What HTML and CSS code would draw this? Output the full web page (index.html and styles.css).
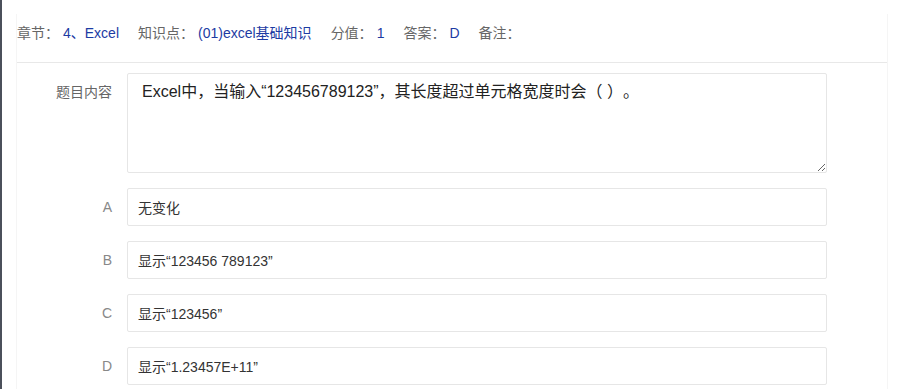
FILE: index.html
```html
<!DOCTYPE html>
<html lang="zh-CN">
<head>
    <meta charset="UTF-8">
    <meta name="viewport" content="width=device-width, initial-scale=1.0">
    <title>题目详情</title>
    <link rel="stylesheet" href="styles.css">
</head>
<body>
    <div class="side-strip"></div>
    <div class="main">
        <div class="card">
            <div class="info-bar">
                <span class="info-item"><span class="info-label">章节：</span><span class="info-value">4、Excel</span></span>
                <span class="info-item"><span class="info-label">知识点：</span><span class="info-value">(01)excel基础知识</span></span>
                <span class="info-item"><span class="info-label">分值：</span><span class="info-value">1</span></span>
                <span class="info-item"><span class="info-label">答案：</span><span class="info-value">D</span></span>
                <span class="info-item"><span class="info-label">备注：</span><span class="info-value"></span></span>
            </div>

            <div class="form">
                <div class="form-row">
                    <label class="form-label">题目内容</label>
                    <textarea class="form-textarea">Excel中，当输入“123456789123”，其长度超过单元格宽度时会（ ）。</textarea>
                </div>
                <div class="form-row">
                    <label class="form-label option-label">A</label>
                    <input class="form-input" type="text" value="无变化">
                </div>
                <div class="form-row">
                    <label class="form-label option-label">B</label>
                    <input class="form-input" type="text" value="显示“123456 789123”">
                </div>
                <div class="form-row">
                    <label class="form-label option-label">C</label>
                    <input class="form-input" type="text" value="显示“123456”">
                </div>
                <div class="form-row">
                    <label class="form-label option-label">D</label>
                    <input class="form-input" type="text" value="显示“1.23457E+11”">
                </div>
            </div>
        </div>
    </div>
</body>
</html>
```

FILE: styles.css
```css
body {
    font-family: 'Liberation Sans', 'Noto Sans CJK SC', sans-serif;
    margin: 0;
    background-color: #fff;
    display: flex;
    min-height: 389px;
    overflow: hidden;
    text-spacing-trim: space-all;
}
.side-strip {
    width: 2px;
    background: #4b505b;
    flex-shrink: 0;
}
.main {
    flex: 1;
    padding: 14px 12px 0 14px;
}
.card {
    border: 1px solid #f5f5f5;
    border-top: none;
    border-bottom: none;
    min-height: 380px;
}
.info-bar {
    display: flex;
    align-items: center;
    padding: 9px 0 19px;
    line-height: 20px;
    font-size: 14px;
    border-bottom: 1px solid #e8e8e8;
}
.info-item {
    margin-right: 19px;
}
.info-label {
    color: #666;
}
.info-value {
    color: #1c3ba3;
    margin-left: 4px;
}
.form {
    padding-top: 10px;
}
.form-row {
    display: flex;
    align-items: flex-start;
    margin-bottom: 15px;
}
.form-label {
    width: 95px;
    padding-right: 15px;
    text-align: right;
    font-size: 14px;
    color: #666;
    line-height: 38px;
    flex-shrink: 0;
}
.option-label {
    color: #888;
}
.form-textarea {
    width: 700px;
    height: 100px;
    box-sizing: border-box;
    border: 1px solid #e6e6e6;
    border-radius: 2px;
    padding: 6px 14px;
    font-family: 'Liberation Sans', 'Noto Sans CJK SC', sans-serif;
    font-size: 16px;
    line-height: 24px;
    color: #222;
    resize: vertical;
    outline: none;
    text-spacing-trim: space-all;
}
.form-input {
    width: 700px;
    height: 38px;
    box-sizing: border-box;
    border: 1px solid #e6e6e6;
    border-radius: 2px;
    padding: 0 10px;
    font-family: 'Liberation Sans', 'Noto Sans CJK SC', sans-serif;
    font-size: 14px;
    color: #333;
    outline: none;
}
```
